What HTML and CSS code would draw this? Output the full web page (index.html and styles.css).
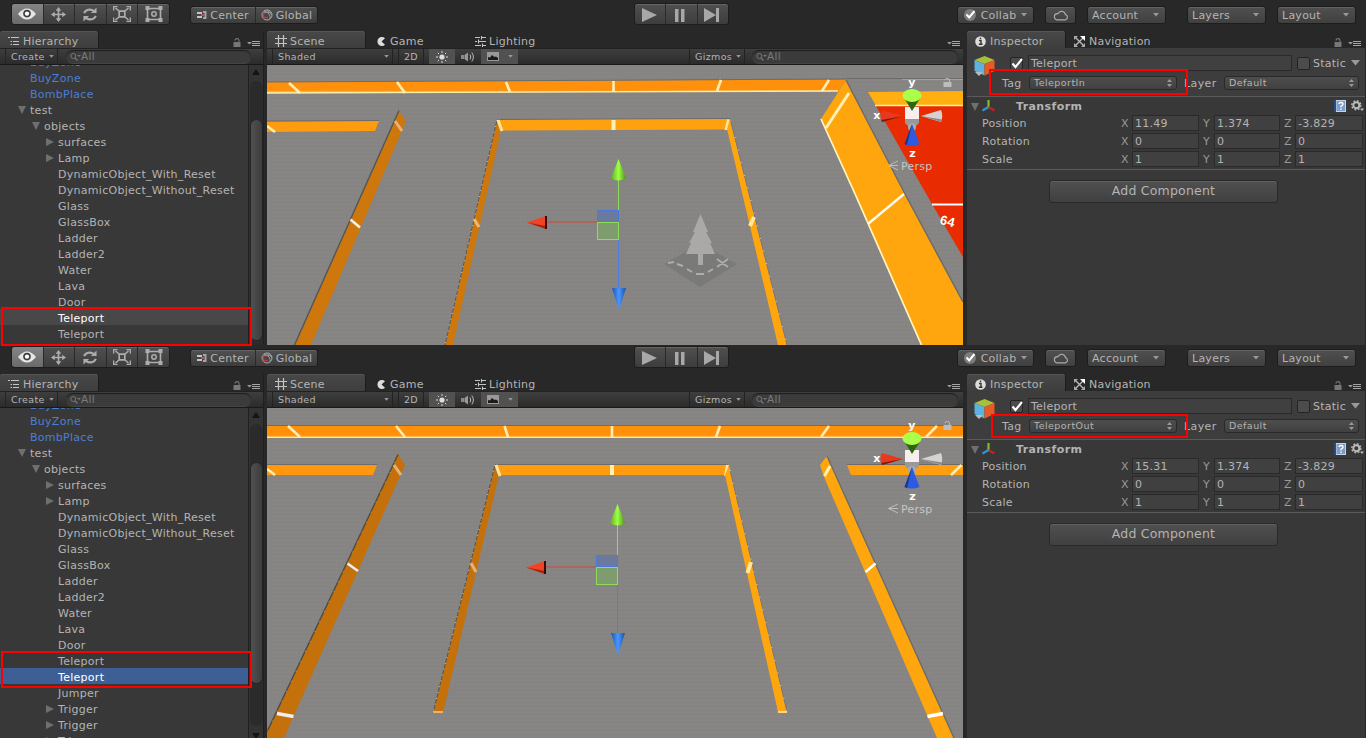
FILE: index.html
```html
<!DOCTYPE html>
<html lang="en">
<head>
<meta charset="utf-8">
<title>Unity Editor - Teleport setup</title>
<link rel="stylesheet" href="styles.css">
</head>
<body>
<svg class="defs" width="0" height="0">
  <defs>
    <pattern id="grain" width="4" height="4" patternUnits="userSpaceOnUse"><rect width="4" height="4" fill="#868583"/><rect width="1" height="1" fill="#8a8987"/><rect x="2" y="2" width="1" height="1" fill="#82817f"/></pattern>
    <linearGradient id="gGreen"><stop offset="0" stop-color="#5fae1c"/><stop offset=".5" stop-color="#9dff45"/><stop offset="1" stop-color="#4b9414"/></linearGradient>
    <linearGradient id="gBlue"><stop offset="0" stop-color="#1d56b8"/><stop offset=".5" stop-color="#4a97ff"/><stop offset="1" stop-color="#1c4ea8"/></linearGradient>
    <linearGradient id="gBand" x1="0" y1="0" x2="0" y2="1"><stop offset="0" stop-color="#ff900c"/><stop offset=".8" stop-color="#ff900c"/><stop offset="1" stop-color="#ffd070"/></linearGradient>

    <symbol id="eye" viewBox="0 0 18 12"><path d="M0 6Q9-5 18 6Q9 17 0 6Z" fill="#e6e6e6"/><circle cx="9" cy="5.6" r="3.8" fill="#3c3c3c"/><circle cx="9" cy="5.6" r="2.2" fill="#fff"/></symbol>
    <symbol id="move" viewBox="0 0 16 16"><path d="M8 2V14M2 8H14" stroke="#adadad" stroke-width="1.8"/><path d="M8 0L11 4H5ZM8 16L5 12H11ZM0 8L4 5V11ZM16 8L12 11V5Z" fill="#adadad"/></symbol>
    <symbol id="rotate" viewBox="0 0 16 16"><path d="M1.800 6.500A6.200 5 0 0 1 12 4.200M14.200 9.500A6.200 5 0 0 1 4 11.800" fill="none" stroke="#adadad" stroke-width="2.200"/><path d="M15 .5V6.500H9ZM1 15.500V9.500H7Z" fill="#adadad"/></symbol>
    <symbol id="scale" viewBox="0 0 18 16"><path d="M2.500 2L6 5M15.500 2L12 5M2.500 14L6 11M15.500 14L12 11" stroke="#adadad" stroke-width="1.600"/><path d="M6.200 5.200H11.800V10.800H6.200Z" fill="none" stroke="#adadad" stroke-width="1.700"/><path d="M.5 4.500V.5H4.500M17.500 4.500V.5H13.500M.5 11.500V15.500H4.500M17.500 11.500V15.500H13.500" fill="none" stroke="#adadad" stroke-width="1.600"/></symbol>
    <symbol id="rect" viewBox="0 0 18 16"><path d="M2.500 2.500H15.500V13.500H2.500Z" fill="none" stroke="#adadad" stroke-width="1.6"/><path d="M.5 0H4.500V4H.5ZM13.500 0H17.500V4H13.500ZM.5 12H4.500V16H.5ZM13.500 12H17.500V16H13.500Z" fill="#adadad"/><circle cx="9" cy="8" r="2.2" fill="none" stroke="#adadad" stroke-width="1.5"/></symbol>
    <symbol id="pivot" viewBox="0 0 10 8"><path d="M0 1H5V3H0ZM0 5H5V7H0Z" fill="#c4c4c4"/><path d="M6 0H9.500V8H6V6H7.500V2H6Z" fill="#a4a4a4"/><path d="M4 3H7V5H4Z" fill="#e0404a"/></symbol>
    <symbol id="globe" viewBox="0 0 12 12"><circle cx="6" cy="6" r="5" fill="none" stroke="#aaa"/><path d="M3 2Q10 4 9 10M6 1Q10 4 11 6M2 4Q6 2 10 4" stroke="#999" fill="none"/><path d="M2.500 3V8.500H7" stroke="#d03038" stroke-width="1.4" fill="none"/></symbol>
    <symbol id="play" viewBox="0 0 15 14"><path d="M0 0L15 7L0 14Z" fill="#a8a8a8"/></symbol>
    <symbol id="pause" viewBox="0 0 10 13"><path d="M0 0H3.500V13H0ZM6 0H9.500V13H6Z" fill="#a8a8a8"/></symbol>
    <symbol id="step" viewBox="0 0 15 14"><path d="M0 0L12 7L0 14ZM12 0H15V14H12Z" fill="#a8a8a8"/></symbol>
    <symbol id="check" viewBox="0 0 12 12"><circle cx="6" cy="6" r="6" fill="#7d7d7d"/><path d="M2.500 5.500L5.200 8.500L10.500 2" stroke="#fff" stroke-width="2" fill="none"/></symbol>
    <symbol id="cloud" viewBox="0 0 16 11"><path d="M4 9.800H12.500A2.700 2.700 0 0 0 12.500 4.600A4 4 0 0 0 5 3.600A3 3 0 0 0 4 9.800Z" fill="none" stroke="#aaa" stroke-width="1.2"/></symbol>
    <symbol id="list" viewBox="0 0 12 10"><path d="M3 1.500H11M5 5.500H11M5 8.500H11" stroke="#c4c4c4" stroke-width="1"/><path d="M0 1.500H2M2.500 5.500H4M2.500 8.500H4" stroke="#c4c4c4" stroke-width="1"/></symbol>
    <symbol id="hash" viewBox="0 0 12 12"><path d="M3.500 0V12M8.500 0V12M0 3.500H12M0 8.500H12" stroke="#c4c4c4" stroke-width="1.2"/></symbol>
    <symbol id="pac" viewBox="0 0 9 9"><path d="M8 1.200A4.500 4.500 0 1 0 8 7.800L4.500 4.500Z" fill="#ddd"/></symbol>
    <symbol id="sliders" viewBox="0 0 11 11"><path d="M0 1.500H5M7 1.500H11M0 5.500H2M4 5.500H11M0 9.500H6M8 9.500H11M6.500 0V3.500M3.500 3.500V7.500M7.500 7.500V11" stroke="#c4c4c4" stroke-width="1.1"/></symbol>
    <symbol id="info" viewBox="0 0 11 11"><circle cx="5.500" cy="5.500" r="5.300" fill="#ddd"/><path d="M4 4.500H6V8M3.800 8.300H7.500" stroke="#333" stroke-width="1.4" fill="none"/><path d="M4.800 1.600H6.200V3.100H4.800Z" fill="#333"/></symbol>
    <symbol id="nav" viewBox="0 0 11 11"><path d="M1 1L10 10M1 10L9 2" stroke="#b8b8b8" stroke-width="1.4"/><path d="M0 0H4L0 4ZM0 11V7L4 11ZM11 11H7L11 7Z" fill="#aaa"/><path d="M6 0H11V5Z" fill="#fff"/></symbol>
    <symbol id="lock" viewBox="0 0 8 9"><path d="M.5 4H7.500V9H.5Z" fill="#777"/><path d="M2 2.400Q2 .6 4 .6Q6 .6 6 2.400V5" stroke="#777" stroke-width="1.1" fill="none"/></symbol>
    <symbol id="menu" viewBox="0 0 13 6"><path d="M0 1H5L2.500 3.500Z" fill="#999"/><path d="M5 .5H13M5 2.500H13M5 4.500H13" stroke="#a4a4a4" stroke-width="1"/></symbol>
    <symbol id="down" viewBox="0 0 6 4"><path d="M0 0H6L3 3.600Z" fill="#999"/></symbol>
    <symbol id="search" viewBox="0 0 11 8"><circle cx="3.300" cy="3" r="2.500" fill="none" stroke="#777"/><path d="M5 5L7.500 7.500" stroke="#777" stroke-width="1.2"/><path d="M7 2H11L9 4Z" fill="#777"/></symbol>
    <symbol id="sun" viewBox="0 0 12 12"><circle cx="6" cy="6" r="2.600" fill="#ddd"/><path d="M6 0V2M6 10V12M0 6H2M10 6H12M1.800 1.800L3 3M9 9L10.200 10.200M10.200 1.800L9 3M1.800 10.200L3 9" stroke="#ddd"/></symbol>
    <symbol id="sound" viewBox="0 0 14 12"><path d="M0 4H3V8H0Z" fill="#888"/><path d="M3.500 4L7 1.500V10.500L3.500 8Z" fill="#999"/><path d="M9 3.500Q10.500 6 9 8.500M10.800 1.500Q14 6 10.800 10.500" stroke="#bbb" fill="none"/></symbol>
    <symbol id="image" viewBox="0 0 12 9"><rect width="12" height="9" fill="#999"/><path d="M1 8V5L3 5.500L5 3L7.500 5L9 4.500L11 6V8Z" fill="#1b1b1b"/></symbol>
    <symbol id="cube" viewBox="0 0 21 21"><path d="M10.500 0L20.500 4L10.500 8L.5 4Z" fill="#a8bf3c"/><path d="M.5 4L10.500 8V19.500L.5 15Z" fill="#5db3de"/><path d="M20.500 4L10.500 8V19.500L20.500 15Z" fill="#e85a24"/><path d="M1 16H9L5 20Z" fill="#bbb"/></symbol>
    <symbol id="tick" viewBox="0 0 13 13"><path d="M2.500 6.500L5.500 10L12 2" fill="none" stroke="#fff" stroke-width="2.1"/></symbol>
    <symbol id="axes" viewBox="0 0 13 12"><path d="M6.500 7V0" stroke="#7fc01c" stroke-width="2.2"/><path d="M6.500 7L12.500 10.500" stroke="#d21a24" stroke-width="2.2"/><path d="M6.500 7L.5 10.500" stroke="#2e95d8" stroke-width="2.2"/></symbol>
    <symbol id="help" viewBox="0 0 12 12"><path d="M0 0H12V12H0Z" fill="#c4d3ea"/><path d="M0 0H2V12H0Z" fill="#2d4b7b"/><path d="M2.500 1H11V11H2.500Z" fill="#7d9cc8"/><path d="M5 4Q5 2.500 7 2.500Q9 2.500 9 4.200Q9 5.500 7 6.200V7.500M7 8.500V10" fill="none" stroke="#fff" stroke-width="1.3"/></symbol>
    <symbol id="gear" viewBox="0 0 13 12"><circle cx="5.300" cy="5.300" r="3" fill="none" stroke="#bbb" stroke-width="1.9"/><circle cx="5.300" cy="5.300" r="4.500" fill="none" stroke="#bbb" stroke-width="1.5" stroke-dasharray="1.77 1.77"/><path d="M9 8.500H13L11 11Z" fill="#bbb"/></symbol>
    <symbol id="updown" viewBox="0 0 5 8"><path d="M0 3L2.500 0L5 3ZM0 5H5L2.500 8Z" fill="#999"/></symbol>

    <g id="orientation">
      <g class="axis-name"><text x="912" y="86">y</text><text x="877" y="119">x</text><text x="912.500" y="157">z</text></g>
      <path d="M943.500 82H951.500V87H943.500Z" fill="#bdbdbd"/><path d="M945 80Q945 78.500 947.300 78.500Q949.500 78.500 949.500 80V83" fill="none" stroke="#bdbdbd"/>
      <path d="M905 119H919V123L916 126H908L905 123Z" fill="#999"/>
      <path d="M882 110Q879 115.500 882 122L903 116Z" fill="#e8391f"/><path d="M881.500 120L903 116L882 122Z" fill="#7c170d"/>
      <path d="M941 110Q943.500 116 941 122L921 116Z" fill="#d6d2d2"/><path d="M921 116L942 119.500V122Z" fill="#898989"/>
      <rect x="905" y="107" width="14" height="12" fill="#f6efee"/>
      <path d="M903.500 97L912 111L921 97Z" fill="#2e6610"/><ellipse cx="912" cy="95.500" rx="9.500" ry="6.500" fill="#aaff4a"/>
      <circle cx="912" cy="127" r="4" fill="#aaa"/><path d="M912 124L919.500 144Q912 147 904.500 144Z" fill="#2d5ae0"/><path d="M912 124L907 145L904.500 144Z" fill="#1c3685"/>
      <path d="M898 161L888.500 165.500L898 170M889 165.500H898" fill="none" stroke="#bdbdbd"/>
      <text class="persp" x="901" y="170">Persp</text>
    </g>
    <g id="arrows">
      <path d="M618.500 180V240" stroke="#8fdc58"/><path d="M618.500 240V289" stroke="#4a7fdc"/>
      <path d="M546 222H597" stroke="#d0493a"/>
      <rect x="597.500" y="210.500" width="21" height="11" fill="#5870b4" fill-opacity=".55" stroke="#4a7bdc"/>
      <rect x="597.500" y="222.500" width="21" height="17" fill="#78b45c" fill-opacity=".5" stroke="#8fdc58"/>
      <path d="M618.500 159L626 178Q618.500 183 611 178Z" fill="url(#gGreen)"/>
      <path d="M612 288H626L619 310Z" fill="url(#gBlue)"/>
      <path d="M527 222.500L546 216V229Z" fill="#f04425"/><path d="M527 222.500L546 226V229Z" fill="#a32311"/><path d="M545 216H547V229H545Z" fill="#3a0a06"/>
    </g>
  </defs>
</svg>

<template id="scene-in">
  <svg class="scene-view" viewBox="267 65 696 280">
    <rect x="267" y="65" width="696" height="280" fill="url(#grain)"/>
    <path d="M267 82L846 79.500L839 91L267 93Z" fill="url(#gBand)"/>
    <path d="M267 82L846 79" stroke="#6d6c69"/><path d="M267 93L838 91" stroke="#fff0a8" stroke-width="1.300"/>
    <path d="M289 83L300 93M397 82L405 93M506 82L510 92M613.500 81V92M721 80L717 91M829 80L822 91" stroke="#ffedb4" stroke-width="2.600"/>
    <path d="M267 121.500L379 121L375 131L267 132Z" fill="#ff9b0f"/><path d="M267 121L379 120.500M497 119.500L730 118.500" stroke="#6d6c69"/><path d="M267 126L275 132" stroke="#fff0b4" stroke-width="2.500"/>
    <path d="M399 111L406 121L311 345H295Z" fill="#cd770c"/><path d="M399 110.500L294.500 345" stroke="#555" stroke-width="1.400"/>
    <path d="M395 121L402 131" stroke="#e6b27a" stroke-width="3"/><path d="M350.500 219.500L360 227.500" stroke="#f4f0ec" stroke-width="2.600"/>
    <path d="M497 120L501 130L453 345H445Z" fill="#cd770c"/><path d="M497 120L445 345" stroke="#5c5a56"/><path d="M497 120L445 345" stroke="#fff" stroke-width=".7" stroke-dasharray="1 5"/>
    <path d="M474 219L479 227" stroke="#eeb878" stroke-width="3"/>
    <path d="M497 120L730 119L727 129.500L500 130.500Z" fill="#ffa10f"/><path d="M498 120L502 131M728.500 119.500L726 130" stroke="#ffe59b" stroke-width="3"/><path d="M613.500 120V130" stroke="#fff0b4" stroke-width="4"/>
    <path d="M730 119L787 345H778L727 129Z" fill="#ffa60e"/><path d="M731 122L787 345" stroke="#777"/><path d="M735 137L787 345" stroke="#fff" stroke-width=".7" stroke-dasharray="1 12"/>
    <path d="M750 226L754 217" stroke="#ffe7a0" stroke-width="4"/>
    <path d="M846 80L821 119L921.500 345H963V302L905 194Z" fill="#ffa60e"/><path d="M846 80L905 194L963 302" stroke="#6d6c69" stroke-width="1.500" fill="none"/>
    <path d="M821 119L856 196L921.500 345" stroke="#fff4c4" stroke-width="1.700" fill="none"/>
    <path d="M849 93L826 128" stroke="#fff0b4" stroke-width="3"/><path d="M904 194L868.500 223.500" stroke="#fffaf0" stroke-width="2.400"/>
    <path d="M868 92L963 91V105.500H876Z" fill="#ffb010"/><path d="M876 106H963V257L932 204Z" fill="#e82b00"/>
    <path d="M875 105.500H963" stroke="#fff0b4" stroke-width="1.300"/><path d="M932 204.500H963" stroke="#fff" stroke-width="2"/>
    <path d="M846 78.500H963" stroke="#6d6c69"/><path d="M902 79.500H963" stroke="#f99018"/>
    <text class="floor-mark" x="940" y="225" transform="rotate(14 945 221)">64</text>
    <path d="M664 264L700 287L737 264L700 244Z" fill="#777775" fill-opacity=".8"/>
    <path d="M668 263L674 262M677 264L683 266M687 269L692 272M696 274H704M708 272L713 269M717 259L728 267M728 259L717 267" fill="none" stroke="#adadab" stroke-width="2"/>
    <path d="M700.500 214L708 232H706L712 243H710L715 254H703V265H698V254H686L691 243H689L695 232H693Z" fill="#aaa9a7"/>
    <use href="#arrows"/><use href="#orientation"/>
  </svg>
</template>

<template id="scene-out">
  <svg class="scene-view" viewBox="267 408 696 330">
    <rect x="267" y="408" width="696" height="330" fill="url(#grain)"/>
    <path d="M267 426H963V437.500H267Z" fill="url(#gBand)"/><path d="M267 425.500H963" stroke="#6d6c69"/><path d="M267 437.500H963" stroke="#fff0a8" stroke-width="1.200"/>
    <path d="M288 426L300 437M396 426L405 437M504.500 426L508 437M612 426V437M720 426L716 437M829 426L821 437M937 426L926 437" stroke="#ffedb4" stroke-width="2.600"/>
    <path d="M267 465H377L373 475H267Z" fill="#ff980f"/><path d="M267 464.500H377M495 464.500H728" stroke="#6d6c69"/><path d="M267 469L275 475" stroke="#fff0b4" stroke-width="2.500"/>
    <path d="M398 454L405 465L284 738H267V731Z" fill="#c4710b"/><path d="M398 454.500L267 732" stroke="#4c4c4b" stroke-width="1.400"/><path d="M395 462L267 733" stroke="#ffc72e" stroke-width=".7" stroke-dasharray="1 10"/>
    <path d="M394 465L401 475" stroke="#e6b27a" stroke-width="3"/><path d="M347.500 563.500L358 571" stroke="#eee" stroke-width="2.600"/><path d="M277 713.500L293.500 716.500" stroke="#eee" stroke-width="3.500"/>
    <path d="M495 465L499 475L443 713H433Z" fill="#c4710b"/><path d="M495 465L433 713" stroke="#55534f"/><path d="M495 465L433 713" stroke="#fff" stroke-width=".7" stroke-dasharray="1 5"/>
    <path d="M471 563L476 572" stroke="#e6b27a" stroke-width="3"/><path d="M433 712H443" stroke="#edb269" stroke-width="2"/>
    <path d="M495 465H729L726 475H499Z" fill="#ff9c0f"/><path d="M496 465L500 476M727.500 465L725.500 476" stroke="#ffe59b" stroke-width="3"/><path d="M612 465V475" stroke="#fff0b4" stroke-width="4"/>
    <path d="M729 465L787 712H778L725 475Z" fill="#ffa60e"/><path d="M730 470L787 712" stroke="#777"/><path d="M730 470L787 712" stroke="#fff" stroke-width=".7" stroke-dasharray="1 12"/>
    <path d="M747.500 573L751 562" stroke="#ffe7a0" stroke-width="4"/><path d="M778 712H787" stroke="#ffd486" stroke-width="2"/>
    <path d="M827 456L820 465L824 477L937 738H954Z" fill="#ffa60e"/><path d="M827 456L954 738" stroke="#6d6c69" stroke-width="1.400"/>
    <path d="M830 466L824.500 476" stroke="#fff0b4" stroke-width="3"/><path d="M875.500 563.500L865.500 572" stroke="#fff" stroke-width="2.600"/><path d="M943 713.500L927.500 716.500" stroke="#fff" stroke-width="3.500"/>
    <path d="M847 465H963V475H851Z" fill="#ff9f0f"/><path d="M847 464.500H963" stroke="#6d6c69"/><path d="M961.500 465L951 475" stroke="#ffedb4" stroke-width="2.600"/>
    <use href="#arrows" transform="translate(-1 345)"/><use href="#orientation" transform="translate(0 343)"/>
  </svg>
</template>

<main id="editors"></main>
<script src="editor.js"></script>
</body>
</html>
```
FILE: editor.js
```javascript
const icon = (name, w, h, cls = '') => `<svg class="icon ${cls}" width="${w}" height="${h}"><use href="#${name}"/></svg>`;

const tree = [
  ['BuyZone', 1, 'prefab'], ['BuyZone', 1, 'prefab'], ['BombPlace', 1, 'prefab'],
  ['test', 1, 'open'], ['objects', 2, 'open'], ['surfaces', 3, 'closed'], ['Lamp', 3, 'closed'],
  ['DynamicObject_With_Reset', 3], ['DynamicObject_Without_Reset', 3], ['Glass', 3], ['GlassBox', 3],
  ['Ladder', 3], ['Ladder2', 3], ['Water', 3], ['Lava', 3], ['Door', 3]
];

const editors = [
  { cls: 'in', tag: 'TeleportIn', x: '11.49', scene: 'scene-in',
    rows: [['Teleport', 3, 'marked'], ['Teleport', 3]] },
  { cls: 'out', tag: 'TeleportOut', x: '15.31', scene: 'scene-out',
    rows: [['Teleport', 3], ['Teleport', 3, 'selected'], ['Jumper', 3], ['Trigger', 3, 'closed'], ['Trigger', 3, 'closed'], ['Trigger', 3, 'closed']] }
];

const row = ([name, depth, state = '']) => `<li class="node depth-${depth} ${state}">${name}</li>`;
const vector = (label, x, y, z) => `<div class="vector"><span>${label}</span><b>X</b><i>${x}</i><b>Y</b><i>${y}</i><b>Z</b><i>${z}</i></div>`;
const drop = (name, label, lead = '') => `<div class="btn drop ${name}">${lead}<span>${label}</span>${icon('down', 6, 4)}</div>`;

const render = e => `
<section class="editor ${e.cls}">
  <header class="toolbar">
    <div class="group tools"><div class="on">${icon('eye', 18, 12)}</div><div>${icon('move', 15, 15)}</div><div>${icon('rotate', 16, 15)}</div><div>${icon('scale', 18, 16)}</div><div>${icon('rect', 18, 16)}</div></div>
    <div class="group pivots"><div>${icon('pivot', 10, 8)}<span>Center</span></div><div>${icon('globe', 12, 12)}<span>Global</span></div></div>
    <div class="group playback"><div>${icon('play', 15, 14)}</div><div>${icon('pause', 10, 13)}</div><div>${icon('step', 15, 14)}</div></div>
    ${drop('collab', 'Collab', icon('check', 12, 12))}
    <div class="btn cloud">${icon('cloud', 16, 11)}</div>
    ${drop('account', 'Account')}${drop('layers', 'Layers')}${drop('layout', 'Layout')}
  </header>
  <div class="panels">
    <div class="hierarchy">
      <div class="tabs"><div class="tab on">${icon('list', 12, 10)}Hierarchy</div><div class="corner">${icon('lock', 8, 9)}${icon('menu', 13, 6)}</div></div>
      <div class="bar"><div class="create">Create${icon('down', 5, 3)}</div><div class="search">${icon('search', 11, 8)}<span>All</span></div></div>
      <div class="tree-area"><ul class="tree">${tree.concat(e.rows).map(row).join('')}</ul><div class="scroll"><span class="up"></span><div class="track"><div class="thumb"></div></div><span class="dn"></span></div></div>
    </div>
    <div class="scene">
      <div class="tabs"><div class="tab on">${icon('hash', 12, 12)}Scene</div><div class="tab game">${icon('pac', 9, 9)}Game</div><div class="tab lighting">${icon('sliders', 11, 11)}Lighting</div><div class="corner">${icon('menu', 13, 6)}</div></div>
      <div class="bar"><div class="shaded">Shaded${icon('down', 5, 3)}</div><div class="two-d">2D</div><div class="toggle on">${icon('sun', 12, 12)}</div><div class="toggle">${icon('sound', 14, 12)}</div><div class="toggle on fx">${icon('image', 12, 9)}${icon('down', 5, 3)}</div><div class="gizmos">Gizmos${icon('down', 5, 3)}</div><div class="search">${icon('search', 11, 8)}<span>All</span></div></div>
      ${document.getElementById(e.scene).innerHTML}
    </div>
    <div class="inspector">
      <div class="tabs"><div class="tab on">${icon('info', 11, 11)}Inspector</div><div class="tab navigation">${icon('nav', 11, 11)}Navigation</div><div class="corner">${icon('lock', 8, 9)}${icon('menu', 13, 6)}</div></div>
      <div class="object">
        ${icon('cube', 21, 21, 'cube')}
        <div class="object-lines">
          <div class="name-line"><div class="box">${icon('tick', 13, 13)}</div><div class="field">Teleport</div><div class="box"></div><span>Static</span>${icon('down', 9, 6)}</div>
          <div class="tag-line"><span>Tag</span><div class="select">${e.tag}${icon('updown', 5, 8)}</div><span>Layer</span><div class="select">Default${icon('updown', 5, 8)}</div><div class="mark"></div></div>
        </div>
      </div>
      <div class="transform">
        <div class="title"><span class="fold"></span>${icon('axes', 13, 12)}<strong>Transform</strong>${icon('help', 12, 12)}${icon('gear', 13, 12)}</div>
        ${vector('Position', e.x, '1.374', '-3.829')}${vector('Rotation', 0, 0, 0)}${vector('Scale', 1, 1, 1)}
      </div>
      <div class="add">Add Component</div>
    </div>
  </div>
  <div class="mark tree-mark"></div>
</section>`;

document.getElementById('editors').innerHTML = editors.map(render).join('');
```
FILE: styles.css
```css
* { box-sizing: border-box; }
body { margin: 0; width: 1366px; height: 738px; overflow: hidden; background: #282828; color: #b4b4b4; font: 11px/16px "DejaVu Sans", sans-serif; letter-spacing: .25px; }
.defs { position: absolute; }
#editors { height: 738px; overflow: hidden; }
.icon { display: block; flex: none; }
.editor { position: relative; height: 345px; display: flex; flex-direction: column; }
.editor.out { height: 393px; }

.toolbar { height: 31px; flex: none; display: flex; align-items: flex-end; padding: 0 0 7px 11px; background: #282828; }
.out .toolbar { height: 29px; }
.toolbar span { padding-top: 1px; }
.group { display: flex; border: 1px solid #1d1d1d; border-radius: 3px; background: linear-gradient(#505050, #3d3d3d); box-shadow: inset 0 1px #656565; }
.group > div { display: flex; align-items: center; justify-content: center; flex: 1; border-left: 1px solid #2a2a2a; }
.group > div:first-child { border-left: 0; }
.tools { width: 159px; height: 22px; margin-bottom: -1px; }
.tools .on { background: linear-gradient(#858585, #6a6a6a); border-radius: 3px 0 0 3px; }
.pivots { width: 128px; height: 18px; margin-left: 20px; }
.pivots > div { gap: 3px; }
.pivots > div:first-child { flex: 0 0 64px; }
.playback { width: 95px; height: 22px; margin: 0 0 -1px 316px; }
.playback > div { padding: 2px 2px 0 0; }
.btn { height: 18px; display: flex; align-items: center; border: 1px solid #1d1d1d; border-radius: 3px; background: linear-gradient(#505050, #404040); box-shadow: inset 0 1px #626262; }
.drop { width: 79px; padding: 0 6px 0 4px; justify-content: space-between; margin-left: 11px; }
.collab { width: 77px; margin-left: 228px; padding-left: 6px; }
.cloud { width: 31px; justify-content: center; margin-left: 11px; }
.layers { margin-left: 21px; }

.panels { flex: 1; min-height: 0; display: grid; grid-template-columns: 264px 696px 399px; gap: 0 3px; }
.inspector { margin-left: 1px; }
.hierarchy, .scene, .inspector { display: flex; flex-direction: column; min-height: 0; min-width: 0; }
.hierarchy { background: #383838; border-right: 1px solid #1f1f1f; }
.inspector { background: #383838; }
.tabs { height: 17px; flex: none; display: flex; background: #282828; }
.tab { height: 17px; display: flex; align-items: center; gap: 2px; padding: 5px 0 0 8px; line-height: 12px; white-space: nowrap; }
.tab .icon { margin-top: -2px; }
.tab.on { width: 98px; border-radius: 3px 3px 0 0; background: linear-gradient(#484848, #3e3e3e); box-shadow: inset 0 1px #555, 1px 0 #1c1c1c; }
.hierarchy .tab { gap: 3px; }
.scene .tab.on { gap: 3px; }
.game { width: 100px; padding-left: 12px; gap: 4px; }
.scene .lighting { padding-left: 10px; gap: 3px; }
.navigation { padding-left: 9px; gap: 4px; }
.inspector .tab.on { gap: 4px; }
.corner { display: flex; align-items: flex-end; gap: 6px; margin-left: auto; padding: 0 3px 1px 0; }
.inspector .corner { padding-right: 4px; }
.bar { height: 17px; flex: none; display: flex; align-items: stretch; background: linear-gradient(#3e3e3e, #2b2b2b); border-top: 1px solid #222; border-bottom: 1px solid #191919; font-size: 9.500px; letter-spacing: .35px; line-height: 16px; }
.create { width: 53px; margin: 0 8px 0 5px; padding: 0 3px 0 5px; display: flex; align-items: center; justify-content: space-between; border: solid #242424; border-width: 0 1px; }
.search { height: 13px; margin-top: 1px; width: 185px; display: flex; align-items: center; padding-left: 4px; border-radius: 7px; background: #3b3b3b; box-shadow: inset 0 1px 1px #1d1d1d, 0 1px #444; color: #7b7b7b; font-size: 10.500px; line-height: 12px; }
.search span { margin-top: -2px; }
.shaded { width: 121px; margin-left: 5px; padding: 0 3px 0 5px; display: flex; align-items: center; justify-content: space-between; border: solid #222; border-width: 0 1px; }
.two-d { width: 26px; margin: 0 5px 0 5px; text-align: center; border: solid #222; border-width: 0 1px; }
.toggle { width: 26px; display: flex; align-items: center; justify-content: center; }
.toggle.on { background: #515151; }
.toggle.fx { width: 37px; gap: 9px; }
.gizmos { width: 56px; margin: 0 7px 0 auto; padding: 0 3px 0 5px; display: flex; align-items: center; justify-content: space-between; border: solid #222; border-width: 0 1px; }
.scene .search { width: 206px; margin-right: 5px; }
.scene-view { display: block; width: 696px; flex: 1; min-height: 0; }
.axis-name { font: bold 11px "DejaVu Sans", sans-serif; fill: #fff; text-anchor: middle; }
.persp { fill: #c6c6c4; font-size: 11px; }
.floor-mark { font: bold 13px "Liberation Sans", sans-serif; fill: #fff; }

.tree-area { flex: 1; min-height: 0; display: flex; overflow: hidden; }
.tree { list-style: none; width: 248px; margin: -12px 0 0; padding: 0; }
.node { height: 16px; line-height: 16px; padding: 3px 0 0 58px; white-space: nowrap; letter-spacing: .28px; display: flex; align-items: center; }
.depth-1 { padding-left: 30px; }
.depth-2 { padding-left: 44px; }
.prefab { color: #4c7fd6; }
.open::before, .closed::before { content: ""; flex: none; margin: -2px 4px 0 -12px; border: 4.500px solid transparent; }
.open::before { border-top: 8px solid #6f6f6f; border-bottom: 0; }
.closed::before { border-left: 8px solid #6f6f6f; border-right: 0; }
.marked { background: #484848; color: #fff; }
.selected { background: #3e5f96; color: #fff; }
.scroll { width: 15px; flex: none; background: #333; border-left: 1px solid #202020; display: flex; flex-direction: column; align-items: center; }
.up, .dn { border: 4px solid transparent; flex: none; }
.up { border-bottom: 6px solid #151515; border-top: 0; margin: 4px 0 6px; }
.dn { border-top: 6px solid #151515; border-bottom: 0; margin: 7px 0 0; }
.track { width: 13px; height: 302px; padding-top: 38px; border-radius: 7px; background: #2b2b2b; flex: none; }
.thumb { height: 222px; border: 1px solid #252525; border-radius: 7px; background: linear-gradient(90deg, #505050, #3d3d3d); }

.object { height: 49px; flex: none; display: flex; padding: 7px 5px 0 7px; border-bottom: 1px solid #5a5a5a; background: #3d3d3d; }
.cube { margin-top: 1px; }
.object-lines { flex: 1; min-width: 0; }
.name-line { display: flex; align-items: center; height: 16px; padding-left: 15px; white-space: nowrap; }
.box { width: 13px; height: 13px; flex: none; border: 1px solid #242424; border-radius: 2px; background: #4c4c4c; }
.box .icon { margin: -1px; }
.field, .vector i { height: 16px; padding-left: 2px; background: #404040; border: 1px solid #2a2a2a; line-height: 15px; font-style: normal; }
.field { width: 264px; margin: 0 5px; }
.name-line span { width: 38px; margin-left: 3px; padding-top: 1px; }
.tag-line { position: relative; display: flex; align-items: center; height: 18px; margin-top: 3px; padding-left: 7px; white-space: nowrap; }
.tag-line > span { padding-top: 1px; }
.tag-line > span:first-child { width: 27px; }
.tag-line > span:nth-child(3) { width: 40px; margin-left: 7px; letter-spacing: .4px; }
.select { width: 148px; height: 14px; display: flex; align-items: center; justify-content: space-between; padding: 0 4px; border: 1px solid #292929; border-radius: 3px; background: linear-gradient(#4e4e4e, #404040); font-size: 9.500px; letter-spacing: .45px; line-height: 12px; }
.select:nth-child(4) { width: 135px; }
.mark { position: absolute; border: 2px solid #f00; }
.tag-line .mark { left: -6px; top: -5px; width: 199px; height: 26px; }
.out .tag-line .mark { left: -4px; top: -3px; width: 197px; height: 24px; }
.tree-mark { left: 1px; top: 307px; width: 251px; height: 39px; z-index: 1; }
.out .tree-mark { top: 306px; height: 37px; }

.transform { flex: none; height: 73px; border-bottom: 1px solid #5a5a5a; padding-left: 5px; }
.title { height: 18px; display: flex; align-items: center; }
.title strong { margin: 2px auto 0 21px; font-size: 11px; letter-spacing: .4px; }
.title .icon:nth-last-child(2) { margin-right: 5px; }
.title .icon:nth-last-child(-n+2) { position: relative; left: -1px; }
.fold { border: 4.500px solid transparent; border-top: 8px solid #6f6f6f; border-bottom: 0; margin: 2px 3px 0 -1px; }
.vector { display: grid; grid-template-columns: 139px 11px 67px 15px 66px 15px 68px; height: 18px; line-height: 17px; padding-left: 10px; }
.vector b { font-weight: normal; color: #999; }
.vector b:nth-of-type(n+2) { padding-left: 4px; }
.add { width: 229px; height: 23px; margin: 10px 0 0 82px; text-align: center; font-size: 12.500px; line-height: 20px; letter-spacing: .2px; border: 1px solid #292929; border-radius: 3px; background: linear-gradient(#505050, #404040); box-shadow: inset 0 1px #606060; }
```
